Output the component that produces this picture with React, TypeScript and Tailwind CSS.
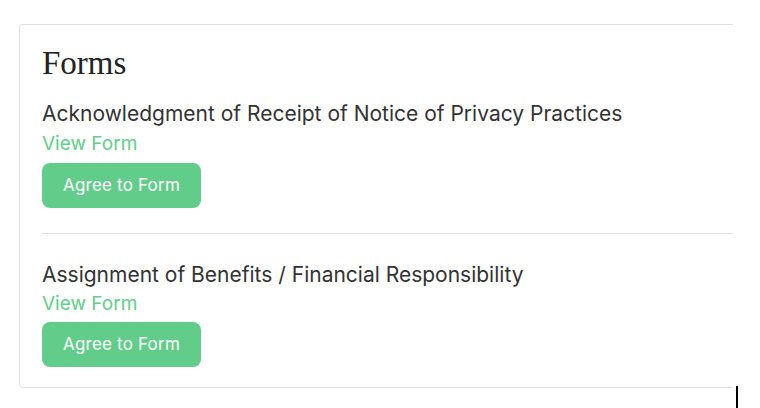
const forms = [
  "Acknowledgment of Receipt of Notice of Privacy Practices",
  "Assignment of Benefits / Financial Responsibility",
];

function FormItem({ title, tight }: { title: string; tight?: boolean }) {
  return (
    <div className="flex flex-col items-start">
      <h3 className="text-[21px] leading-[28px] text-[#333333]">{title}</h3>
      <a className={`${tight ? "mt-[2px]" : "mt-[3px]"} text-[19px] leading-[26px] text-[#62cd8b]`}>View Form</a>
      <button
        className={`${tight ? "mt-[5px]" : "mt-[6px]"} h-[45px] w-[159px] rounded-[8px] bg-[#62cd8b] text-[17px] tracking-[0.2px] text-white`}
      >
        Agree to Form
      </button>
    </div>
  );
}

export default function App() {
  return (
    <div className="relative h-[408px] w-[760px] bg-white pl-[19px] pt-[24px] font-['Inter',sans-serif]">
      <div className="w-[714px] overflow-hidden">
        <div className="w-[760px] rounded-[4px] border border-[#e2e2e2] pb-[20px] pl-[22px] pt-[18px]">
          <h2 className="font-['Liberation_Serif',serif] text-[33px] leading-[40px] text-[#222222]">Forms</h2>
          <div className="mt-[17px]">
            <FormItem title={forms[0]} />
          </div>
          <div className="mt-[25px] border-t border-[#e2e2e2] pt-[27px]">
            <FormItem title={forms[1]} tight />
          </div>
        </div>
      </div>
      <div className="absolute left-[736px] top-[386px] h-[22px] w-[2px] bg-black" />
    </div>
  );
}
